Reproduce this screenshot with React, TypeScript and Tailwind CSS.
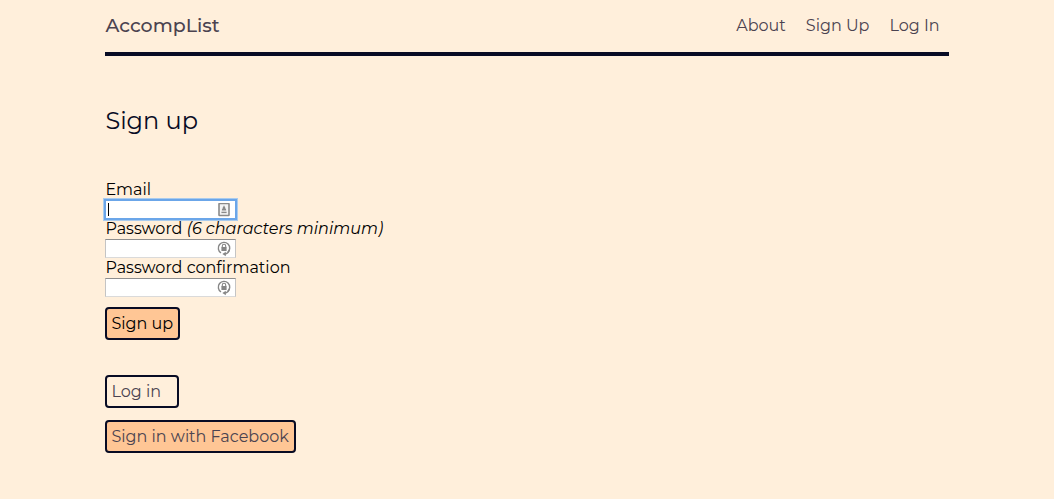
import type { ReactNode } from "react";

function ContactIcon() {
  return (
    <svg viewBox="0 0 12 14" className="h-3.5 w-3" aria-hidden="true">
      <rect x="1" y="0.5" width="10" height="12" rx="0.5" fill="#f4f4f4" stroke="#8a8a8a" strokeWidth="1.6" />
      <path d="M6 2.3 7.4 5H4.6z" fill="#8a8a8a" />
      <path d="M3.8 7.5c0-1.8 1-2.8 2.2-2.8s2.2 1 2.2 2.8z" fill="#8a8a8a" />
      <path d="M3.4 9.4h5.2" stroke="#8a8a8a" strokeWidth="1.4" />
    </svg>
  );
}

function LockIcon() {
  return (
    <svg viewBox="0 0 14 16" className="h-4 w-3.5" fill="none" aria-hidden="true">
      <path d="M4 11.9A5.7 5.7 0 1 1 10.6 11.5" stroke="#868686" strokeWidth="1.4" />
      <path d="M12.4 8.9c-.6 2.4-2.2 3.8-4.6 4.2" stroke="#868686" strokeWidth="1.4" />
      <path d="M8.8 10.7v4.6L5.4 13z" fill="#868686" />
      <rect x="4.4" y="6.1" width="5.2" height="4" rx="0.4" fill="#868686" />
      <path d="M5.3 6.5V4.9a1.7 1.7 0 0 1 3.4 0v1.6" stroke="#868686" strokeWidth="1.1" />
    </svg>
  );
}

type FieldProps = {
  id: string;
  type: string;
  label: ReactNode;
  icon: ReactNode;
  focused?: boolean;
};

function Field({ id, type, label, icon, focused = false }: FieldProps) {
  return (
    <div>
      <label htmlFor={id} className="block h-5 leading-5 whitespace-nowrap">
        {label}
      </label>
      <div className="relative w-[131px]">
        <input
          id={id}
          type={type}
          className={
            focused
              ? "block h-[19px] w-full bg-white pr-5 pl-[3px] text-xs text-black caret-transparent outline-2 -outline-offset-1 outline-[#6ba6e9] ring-2 ring-[#a9cbee]"
              : "block h-[19px] w-full border border-t-[#8e8e8e] border-r-[#c4c4c4] border-b-[#dadada] border-l-[#c4c4c4] bg-white pr-5 pl-[3px] text-xs text-black outline-none"
          }
        />
        {focused && <span className="pointer-events-none absolute top-[3px] left-[3px] h-[13px] w-px bg-black" />}
        <span className="pointer-events-none absolute inset-y-0 right-[5px] flex w-3.5 items-center justify-center">
          {icon}
        </span>
      </div>
    </div>
  );
}

export default function App() {
  return (
    <div className="mx-auto w-4/5 pb-11 font-['Montserrat','Inter','Liberation_Sans',sans-serif] text-base text-[#080b24]">
      <header className="flex h-14 items-center justify-between border-b-4 border-[#080b24] text-[#4b4350]">
        <a href="#home" className="text-[19px] font-medium">AccompList</a>
        <nav className="flex gap-5 pr-[9px]">
          <a href="#about">About</a>
          <a href="#signup">Sign Up</a>
          <a href="#login">Log In</a>
        </nav>
      </header>
      <main>
        <h1 className="mt-12 text-2xl leading-[34px] text-[#080b24]">Sign up</h1>
        <form className="mt-[42px] text-black" onSubmit={(event) => event.preventDefault()}>
          <Field id="email" type="email" label="Email" icon={<ContactIcon />} focused />
          <Field
            id="password"
            type="password"
            label={<>Password <em>(6 characters minimum)</em></>}
            icon={<LockIcon />}
          />
          <Field id="confirmation" type="password" label="Password confirmation" icon={<LockIcon />} />
          <button
            type="submit"
            className="mt-2.5 flex h-[33px] w-[75px] items-center rounded border-2 border-[#080b24] bg-[#ffc695] pl-1 whitespace-nowrap"
          >
            Sign up
          </button>
        </form>
        <div className="mt-[35px] flex flex-col items-start gap-3 text-[#4b4350]">
          <a href="#login" className="flex h-[33px] w-[74px] items-center rounded border-2 border-[#080b24] pl-1 whitespace-nowrap">
            Log in
          </a>
          <a href="#facebook" className="flex h-[33px] w-[191px] items-center rounded border-2 border-[#080b24] bg-[#ffc695] pl-1 whitespace-nowrap">
            Sign in with Facebook
          </a>
        </div>
      </main>
      <style>{"html { background: #ffefdb; }"}</style>
    </div>
  );
}
